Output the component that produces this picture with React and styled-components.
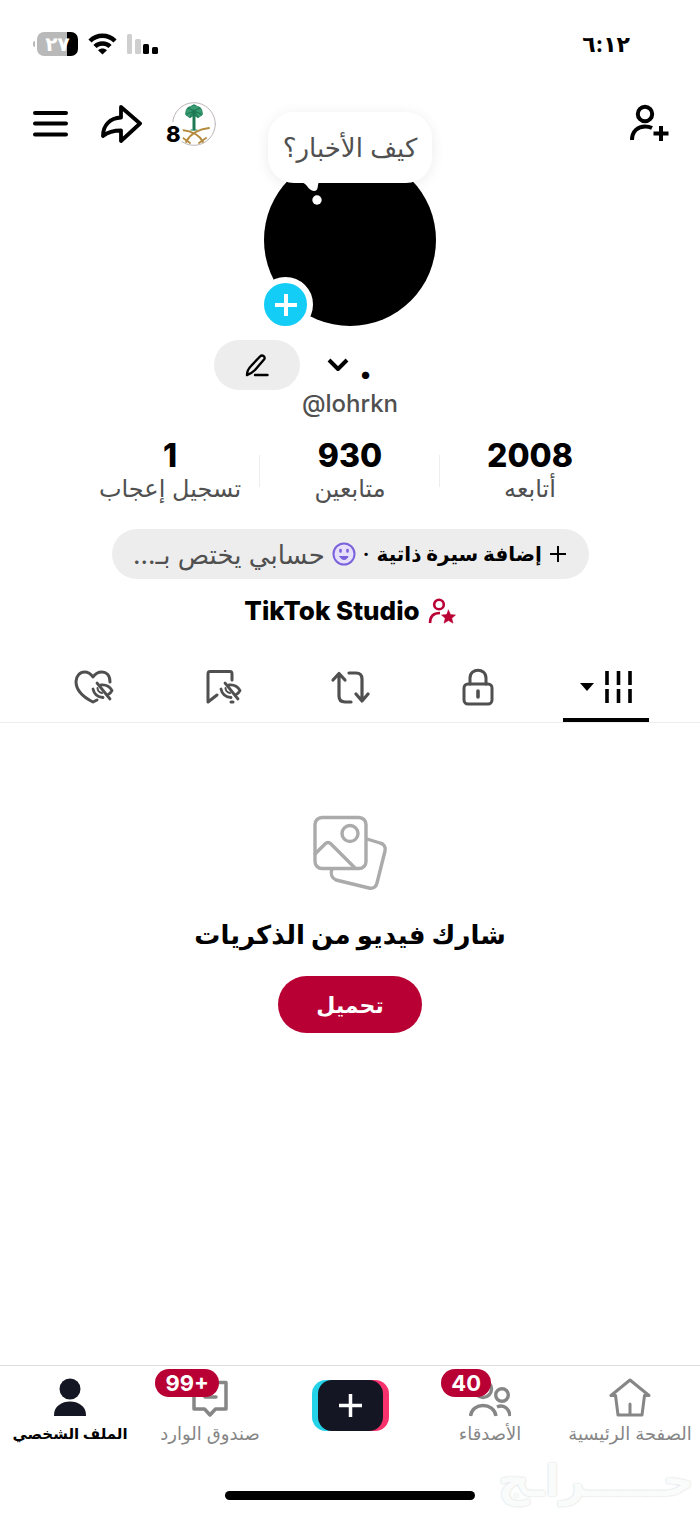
import React from 'react';
import styled, { createGlobalStyle } from 'styled-components';

const GlobalStyle = createGlobalStyle`
  * {
    box-sizing: border-box;
  }

  body {
    margin: 0;
    background: #fff;
    color: #000;
    font-family: Inter, 'DejaVu Sans', sans-serif;
  }

  button {
    border: 0;
    padding: 0;
    background: none;
    color: inherit;
    font: inherit;
    cursor: pointer;
  }

  a {
    color: inherit;
    text-decoration: none;
  }

  svg {
    display: block;
  }
`;

const Page = styled.div`
  display: flex;
  flex-direction: column;
  min-height: 100vh;
`;

const StatusBar = styled.div`
  display: flex;
  align-items: center;
  justify-content: space-between;
  height: 88px;
  padding: 0 70px 0 33px;
`;

const Time = styled.time`
  font-size: 22px;
  font-weight: 700;
  line-height: 32px;
`;

const StatusIcons = styled.div`
  display: flex;
  align-items: center;
  gap: 10px;
`;

const Battery = styled.div`
  display: flex;
  align-items: center;
  gap: 2px;

  &::after {
    content: '';
    width: 2px;
    height: 6px;
    border-radius: 2px 0 0 2px;
    background: #b9b9b9;
  }
`;

const BatteryLevel = styled.span`
  width: 41px;
  height: 24px;
  border-radius: 7px;
  background: linear-gradient(to left, #000 11px, #b9b9b9 11px);
  color: #fff;
  font-size: 20px;
  font-weight: 700;
  line-height: 24px;
  text-align: center;
`;

const Header = styled.header`
  display: grid;
  grid-template-columns: 1fr auto 1fr;
  padding: 0 30px;
`;

const HeaderSide = styled.div`
  display: flex;
  align-items: center;
  justify-content: ${props => (props.$end ? 'flex-end' : 'flex-start')};
  gap: 30px;
  height: 72px;
`;

const Visitors = styled.button`
  position: relative;
`;

const VisitorCount = styled.span`
  position: absolute;
  left: -8px;
  bottom: 0;
  padding: 0 2px;
  border-radius: 10px;
  background: #fff;
  font-size: 22px;
  font-weight: 800;
  line-height: 24px;
`;

const Avatar = styled.div`
  position: relative;
  width: 172px;
  height: 172px;
  margin-top: 66px;
  border-radius: 50%;
  background: #000;
`;

const Thought = styled.button`
  position: absolute;
  top: -42px;
  left: 4px;
  width: 164px;
  height: 71px;
  border-radius: 26px;
  background: #fff;
  box-shadow: 0 2px 14px rgba(0, 0, 0, 0.08);
  color: #505050;
  font-size: 26px;
  white-space: nowrap;
`;

const ThoughtTail = styled.svg`
  position: absolute;
  top: 70px;
  left: 32px;
`;

const AddPhoto = styled.button`
  position: absolute;
  left: -6px;
  bottom: -6px;
  display: grid;
  place-items: center;
  width: 55px;
  height: 55px;
  border: 6px solid #fff;
  border-radius: 50%;
  background: #14cdf6;
  color: #fff;
`;

const NameRow = styled.div`
  display: grid;
  grid-template-columns: 1fr auto 1fr;
  align-items: center;
  margin-top: 14px;
`;

const NameButton = styled.button`
  grid-column: 2;
  display: flex;
  align-items: center;
  gap: 9px;
  font-size: 40px;
  font-weight: 800;
  line-height: 28px;
`;

const EditButton = styled.button`
  display: grid;
  place-items: center;
  width: 86px;
  height: 50px;
  margin-right: 27px;
  border-radius: 25px;
  background: #ededed;
`;

const Handle = styled.div`
  color: #505050;
  font-size: 24px;
  font-weight: 500;
  line-height: 28px;
  text-align: center;
`;

const Stats = styled.div`
  display: flex;
  justify-content: center;
  margin-top: 20px;
`;

const Stat = styled.a`
  display: flex;
  flex-direction: column;
  align-items: center;
  width: 180px;
`;

const StatDivider = styled.span`
  width: 1px;
  height: 32px;
  margin: 17px 0 0 -1px;
  background: #ededed;
`;

const StatValue = styled.strong`
  font-size: 32px;
  font-weight: 800;
  line-height: 36px;
`;

const StatLabel = styled.span`
  color: #505050;
  font-size: 24px;
  line-height: 30px;
  white-space: nowrap;
`;

const BioButton = styled.button`
  display: flex;
  align-items: center;
  align-self: center;
  justify-content: center;
  gap: 7px;
  width: 477px;
  height: 50px;
  margin-top: 25px;
  border-radius: 25px;
  background: #ededed;
  font-size: 20px;
  font-weight: 700;
  white-space: nowrap;
`;

const BioHint = styled.span`
  color: #505050;
  font-size: 26px;
  font-weight: 400;
`;

const Studio = styled.a`
  display: flex;
  align-items: center;
  align-self: center;
  gap: 8px;
  margin-top: 17px;
  font-size: 26px;
  font-weight: 800;
  line-height: 30px;
`;

const Tabs = styled.div`
  display: flex;
  margin-top: 28px;
  padding: 0 30px;
  border-bottom: 1px solid #ededed;
`;

const Tab = styled.button`
  flex: 1;
  display: flex;
  justify-content: center;
  height: 68px;
  color: ${props => (props.$active ? '#000' : '#505050')};
`;

const TabInner = styled.span`
  display: flex;
  align-items: center;
  justify-content: center;
  gap: 10px;
  width: 86px;
  height: 68px;
  padding-top: 2px;
  border-bottom: 4px solid ${props => (props.$active ? '#000' : 'transparent')};
`;

const Empty = styled.main`
  flex: 1;
  display: flex;
  flex-direction: column;
  align-items: center;
  padding: 92px 20px 40px;
`;

const EmptyTitle = styled.h1`
  margin: 24px 0 21px;
  font-size: 26px;
  font-weight: 700;
  line-height: 40px;
`;

const Upload = styled.button`
  width: 144px;
  height: 57px;
  border-radius: 29px;
  background: #b80034;
  color: #fff;
  font-size: 22px;
  font-weight: 700;
`;

const BottomNav = styled.nav`
  display: flex;
  padding-top: 8px;
  border-top: 1px solid #dedede;
`;

const NavItem = styled.a`
  flex: 1;
  display: flex;
  flex-direction: column;
  align-items: center;
  color: ${props => (props.$active ? '#000' : '#868686')};
  font-size: ${props => (props.$active ? 15 : 18)}px;
  font-weight: ${props => (props.$active ? 700 : 400)};
  line-height: 28px;
  white-space: nowrap;
`;

const NavIcon = styled.span`
  position: relative;
  display: grid;
  place-items: center;
  height: 46px;
`;

const Badge = styled.span`
  position: absolute;
  top: -5px;
  right: ${props => props.$right}px;
  padding: 0 10px;
  border-radius: 14px;
  background: #b80034;
  color: #fff;
  font-size: 22px;
  font-weight: 700;
  line-height: 28px;
`;

const CreateButton = styled.button`
  flex: 1;
  display: flex;
  justify-content: center;
  padding-top: 6px;
`;

const Footer = styled.footer`
  display: grid;
  grid-template-columns: minmax(0, 1fr) 250px minmax(0, 1fr);
  align-items: center;
  height: 66px;
`;

const HomeIndicator = styled.span`
  grid-column: 2;
  height: 9px;
  margin-top: 28px;
  border-radius: 5px;
  background: #000;
`;

const Watermark = styled.span`
  justify-self: start;
  margin-right: 6px;
  color: #fafbfb;
  font-family: 'DejaVu Sans', sans-serif;
  font-size: 44px;
  font-weight: 700;
  line-height: 66px;
  text-shadow: 0 0 2px #c9cdd0;
  white-space: nowrap;
`;

const Icon = ({ w, h, stroke = 3, children }) => (
  <svg
    width={w}
    height={h}
    viewBox={`0 0 ${w} ${h}`}
    fill="none"
    stroke="currentColor"
    strokeWidth={stroke}
    strokeLinecap="round"
    strokeLinejoin="round"
    aria-hidden="true"
  >
    {children}
  </svg>
);

const SignalIcon = () => (
  <Icon w={31} h={22} stroke={0}>
    <rect x="0" y="1" width="5" height="20" rx="1.5" fill="#cfcfcf" />
    <rect x="8" y="6" width="6" height="15" rx="1.5" fill="#cfcfcf" />
    <rect x="16" y="11" width="6" height="10" rx="1.5" fill="#000" />
    <rect x="25" y="14" width="6" height="7" rx="1.5" fill="#000" />
  </Icon>
);

const WifiIcon = () => (
  <Icon w={29} h={22} stroke={4.5}>
    <path d="M2 8C9 1 20 1 27 8" strokeLinecap="butt" />
    <path d="M7 13.5C11 9.5 18 9.5 22 13.5" strokeLinecap="butt" />
    <path d="M10 17.2C12.5 15 16.5 15 19 17.2L14.5 21.5Z" fill="currentColor" stroke="none" />
  </Icon>
);

const MenuIcon = () => (
  <Icon w={40} h={40} stroke={4}>
    <path d="M5 9H36M5 19.5H36M5 30.5H36" />
  </Icon>
);

const ShareIcon = () => (
  <Icon w={42} h={40} stroke={3.8}>
    <path d="M21 3L40 19.5L21 37V26.5C14 26.5 8 28 3 32C3 21 10 14 21 13.5Z" />
  </Icon>
);

const EmblemIcon = () => (
  <Icon w={44} h={44} stroke={1}>
    <circle cx="22" cy="22" r="21.3" stroke="#bdb6b6" />
    <path
      d="M22 3C24 3 25 5 27 5C29 6 30 8 30 10C31 12 30 14 28 14C27 16 25 16 24 14H20C19 16 17 16 16 14C14 14 13 12 14 10C14 8 15 6 17 5C19 5 20 3 22 3Z"
      fill="#3a9a72"
      stroke="#23855c"
    />
    <g stroke="#1d7a53" strokeWidth="1.2">
      <path d="M22 9V27" strokeWidth="3" />
      <path d="M22 9L16 6M22 9L28 6M22 9L15 12M22 9L29 12M22 9L18 15M22 9L26 15M19 28H25" />
    </g>
    <g stroke="#b58a3c" strokeWidth="1.8">
      <path d="M10 28C19 29 27 32 31 40M37 26C27 27 18 32 14 40" />
      <path d="M27 41L34 36M11 36L18 41" />
    </g>
  </Icon>
);

const AddFriendIcon = () => (
  <Icon w={42} h={42} stroke={4}>
    <circle cx="17" cy="11" r="7.2" />
    <path d="M4 37C4 28 10 23.5 17 23.5C20 23.5 22 24 24 25" strokeLinecap="butt" />
    <path d="M33 23V38M25.5 30.5H40.5" strokeLinecap="butt" />
  </Icon>
);

const PlusIcon = ({ size, stroke }) => (
  <Icon w={size} h={size} stroke={stroke}>
    <path d={`M${size / 2} 1V${size - 1}M1 ${size / 2}H${size - 1}`} strokeLinecap="butt" />
  </Icon>
);

const PencilIcon = () => (
  <Icon w={24} h={24} stroke={2.4}>
    <path d="M2 22C2 18 4 15 6 13L15 3.5C17.5 1 21 4 19 6.5L10 17C8 19 5 21 2 22Z" />
    <path d="M10 22H22.5" />
  </Icon>
);

const SmileIcon = () => (
  <Icon w={24} h={24} stroke={2}>
    <g stroke="#7b61dc">
      <circle cx="12" cy="12" r="10.5" fill="#e6e0fb" />
      <path d="M8.5 8V9.5M15.5 8V9.5" strokeWidth="2.6" />
      <path d="M8 14.5H16C15 18.5 9 18.5 8 14.5Z" fill="#7b61dc" strokeWidth="1" />
    </g>
  </Icon>
);

const StudioIcon = () => (
  <Icon w={28} h={26} stroke={2.6}>
    <g stroke="#b80034">
      <circle cx="11" cy="6.5" r="4.8" />
      <path d="M2 25C2 19 5 15 12 15" strokeLinecap="butt" />
      <path
        d="M20.5 12L22.5 16.5L27.5 17L23.8 20.3L25 25.2L20.5 22.6L16 25.2L17.2 20.3L13.5 17L18.5 16.5Z"
        fill="#b80034"
        strokeWidth="0.5"
      />
    </g>
  </Icon>
);

const GridIcon = () => (
  <Icon w={28} h={34} stroke={3.6}>
    <path d="M3 1V15M14.5 1V15M26 1V15M3 19V33M14.5 19V33M26 19V33" strokeLinecap="butt" />
  </Icon>
);

const LockIcon = () => (
  <Icon w={32} h={38} stroke={3}>
    <rect x="2" y="16" width="28" height="20" rx="4" />
    <path d="M8 16V10C8 -0.5 24 -0.5 24 10V16" />
    <path d="M16 23V29" strokeWidth="3.6" />
  </Icon>
);

const RepostIcon = () => (
  <Icon w={40} h={34} stroke={3.2}>
    <path d="M3 10L9 3.5L15 10M9 5V26C9 30 11 32 15 32H21" />
    <path d="M19 3H26C30 3 32 5 32 9V30M26 24L32 31L38 24" />
  </Icon>
);

const HiddenEye = () => (
  <g strokeWidth="2.8">
    <path d="M23 14L36 30" />
    <path d="M27 16C32 15.5 36 18 38 21.5C37 23.5 36 25 33.5 26" />
    <path d="M19 20C20 25 24 28 29 28.5" />
    <path d="M23.5 19C23.5 21 25 23.5 28 24" strokeWidth="2" />
  </g>
);

const LikedIcon = () => (
  <Icon w={40} h={36} stroke={3}>
    <path d="M36 13C36 6 32 3 28 3C24 3 21 5 19 8C17 5 14 3 10.5 3C6 3 2 7 2 12.5C2 21 9 28 19 33L23 31" />
    <HiddenEye />
  </Icon>
);

const SavedIcon = () => (
  <Icon w={40} h={36} stroke={3}>
    <path d="M30 11V5C30 3 29 2.5 28 2.5H8C7 2.5 6 3 6 5V33L15 26M29 33H31" />
    <HiddenEye />
  </Icon>
);

const PhotosIcon = () => (
  <Icon w={76} h={76} stroke={3.4}>
    <g stroke="#ababab">
      <rect x="3" y="2.5" width="51" height="51" rx="7" />
      <circle cx="38" cy="18.5" r="8" />
      <path d="M3 39L13 29C15 27 17 27 19 29L43 53" />
      <path d="M55 24L68 28C72 29 74 32 73 36L65 68C64 72 61 74 57 73L24 65C20 63 18 59 20 54" />
    </g>
  </Icon>
);

const HomeIcon = () => (
  <Icon w={42} h={40} stroke={3}>
    <path d="M21 3L2 18.5H6.5L9 38H33L35.5 18.5H40ZM21 27V37" />
  </Icon>
);

const FriendsIcon = () => (
  <Icon w={42} h={40} stroke={3.4}>
    <circle cx="14" cy="12" r="8.5" />
    <circle cx="33" cy="18" r="6.3" />
    <path d="M1.5 39C3 25 25 25 27 39M28 30C34 27 40 31 41 39" strokeLinecap="butt" />
  </Icon>
);

const InboxIcon = () => (
  <Icon w={38} h={40} stroke={3.5}>
    <path d="M3 5.5H35V32H24.5L19 38L13.5 32H3ZM14 20H25" />
  </Icon>
);

const ProfileIcon = () => (
  <Icon w={36} h={40} stroke={0}>
    <circle cx="18" cy="12" r="10.5" fill="#141723" />
    <path d="M2 38C2 20 34 20 34 38C34 39 34 39 33 39H3C2 39 2 39 2 38Z" fill="#141723" />
  </Icon>
);

const CreateIcon = () => (
  <Icon w={77} h={51} stroke={3.5}>
    <rect x="0" y="0" width="60" height="51" rx="14" fill="#25d3e8" stroke="none" />
    <rect x="17" y="0" width="60" height="51" rx="14" fill="#f8326c" stroke="none" />
    <rect x="6" y="0" width="65" height="51" rx="14" fill="#141723" stroke="none" />
    <path d="M38.5 14V37M27 25.5H50" stroke="#fff" strokeLinecap="butt" />
  </Icon>
);

const stats = [
  { value: '2008', label: 'أتابعه' },
  { value: '930', label: 'متابعين' },
  { value: '1', label: 'تسجيل إعجاب' },
];

const tabs = [
  { name: 'الخاصة', icon: <LockIcon /> },
  { name: 'إعادة النشر', icon: <RepostIcon /> },
  { name: 'المحفوظات', icon: <SavedIcon /> },
  { name: 'الإعجابات', icon: <LikedIcon /> },
];

const App = () => (
  <Page dir="rtl" lang="ar">
    <GlobalStyle />
    <StatusBar>
      <Time>٦:١٢</Time>
      <StatusIcons>
        <SignalIcon />
        <WifiIcon />
        <Battery>
          <BatteryLevel>٢٧</BatteryLevel>
        </Battery>
      </StatusIcons>
    </StatusBar>

    <Header>
      <HeaderSide>
        <button type="button" aria-label="إضافة أصدقاء">
          <AddFriendIcon />
        </button>
      </HeaderSide>
      <Avatar>
        <Thought type="button">
          كيف الأخبار؟
          <ThoughtTail width="28" height="24" viewBox="0 0 28 24" fill="#fff" aria-hidden="true">
            <path d="M0 0C7 0 8 9 14 9C19 9 17 3 19 0Z" />
            <circle cx="17" cy="18" r="4.7" />
          </ThoughtTail>
        </Thought>
        <AddPhoto type="button" aria-label="إضافة صورة">
          <PlusIcon size={24} stroke={4} />
        </AddPhoto>
      </Avatar>
      <HeaderSide $end>
        <Visitors type="button" aria-label="الزوار">
          <EmblemIcon />
          <VisitorCount>8</VisitorCount>
        </Visitors>
        <button type="button" aria-label="مشاركة">
          <ShareIcon />
        </button>
        <button type="button" aria-label="القائمة">
          <MenuIcon />
        </button>
      </HeaderSide>
    </Header>

    <NameRow>
      <NameButton type="button">
        <span>.</span>
        <Icon w={22} h={14} stroke={4}>
          <path d="M2 2L11 11L20 2" strokeLinecap="butt" />
        </Icon>
      </NameButton>
      <EditButton type="button" aria-label="تعديل">
        <PencilIcon />
      </EditButton>
    </NameRow>
    <Handle dir="ltr">@lohrkn</Handle>

    <Stats>
      {stats.map((stat, i) => (
        <React.Fragment key={stat.label}>
          {i > 0 && <StatDivider />}
          <Stat href="#stats">
            <StatValue>{stat.value}</StatValue>
            <StatLabel>{stat.label}</StatLabel>
          </Stat>
        </React.Fragment>
      ))}
    </Stats>

    <BioButton type="button">
      <PlusIcon size={18} stroke={2} />
      <span>إضافة سيرة ذاتية</span>
      <span>·</span>
      <SmileIcon />
      <BioHint>حسابي يختص بـ...</BioHint>
    </BioButton>

    <Studio href="#studio">
      <StudioIcon />
      TikTok Studio
    </Studio>

    <Tabs role="tablist">
      <Tab type="button" role="tab" aria-selected="true" aria-label="المنشورات" $active>
        <TabInner $active>
          <GridIcon />
          <Icon w={14} h={8} stroke={0}>
            <path d="M0 0H14L7 8Z" fill="currentColor" />
          </Icon>
        </TabInner>
      </Tab>
      {tabs.map(tab => (
        <Tab key={tab.name} type="button" role="tab" aria-selected="false" aria-label={tab.name}>
          <TabInner>{tab.icon}</TabInner>
        </Tab>
      ))}
    </Tabs>

    <Empty>
      <PhotosIcon />
      <EmptyTitle>شارك فيديو من الذكريات</EmptyTitle>
      <Upload type="button">تحميل</Upload>
    </Empty>

    <BottomNav>
      <NavItem href="#home">
        <NavIcon>
          <HomeIcon />
        </NavIcon>
        الصفحة الرئيسية
      </NavItem>
      <NavItem href="#friends">
        <NavIcon>
          <FriendsIcon />
          <Badge $right={20}>40</Badge>
        </NavIcon>
        الأصدقاء
      </NavItem>
      <CreateButton type="button" aria-label="إنشاء">
        <CreateIcon />
      </CreateButton>
      <NavItem href="#inbox">
        <NavIcon>
          <InboxIcon />
          <Badge $right={10} dir="ltr">99+</Badge>
        </NavIcon>
        صندوق الوارد
      </NavItem>
      <NavItem href="#profile" $active>
        <NavIcon>
          <ProfileIcon />
        </NavIcon>
        الملف الشخصي
      </NavItem>
    </BottomNav>
    <Footer>
      <Watermark>حـــــراـج</Watermark>
      <HomeIndicator />
    </Footer>
  </Page>
);

export default App;
